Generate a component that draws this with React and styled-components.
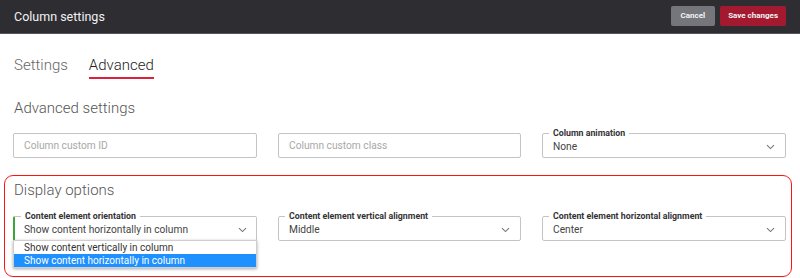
import React from "react";
import styled, { createGlobalStyle } from "styled-components";

const GlobalStyle = createGlobalStyle`
  body {
    margin: 0;
    font-family: Roboto, "Liberation Sans", sans-serif;
    background: #fff;
  }
`;

const Header = styled.header`
  height: 33px;
  background: #2e2d32;
  border-bottom: 1px solid #55545a;
  display: flex;
  align-items: center;
  justify-content: space-between;
  padding: 0 14px 0 14px;
  h1 {
    margin: 0;
    font-size: 12.5px;
    font-weight: 400;
    color: #f2f2f2;
  }
`;

const Actions = styled.div`
  display: flex;
  gap: 5px;
  margin-top: -2px;
`;

const Button = styled.button`
  height: 20px;
  border: none;
  border-radius: 2px;
  padding: 0 ${(p) => (p.$primary ? "8px" : "10px")};
  font-family: Roboto, "Liberation Sans", sans-serif;
  font-size: 8px;
  font-weight: 700;
  color: #f4f4f4;
  background: ${(p) => (p.$primary ? "#a3192f" : "#75757c")};
`;

const Body = styled.main`
  padding: 21px 0 0;
`;

const Tabs = styled.div`
  display: flex;
  gap: 21px;
  padding-left: 14px;
`;

const Tab = styled.div`
  font-size: 15px;
  font-weight: 300;
  line-height: 20px;
  color: ${(p) => (p.$active ? "#222" : "#666")};
  padding-bottom: 2px;
  border-bottom: 2px solid ${(p) => (p.$active ? "#d9223c" : "transparent")};
`;

const Heading = styled.h2`
  margin: 0;
  font-size: 15px;
  font-weight: 300;
  color: #555;
  line-height: 20px;
`;

const Section = styled.section`
  padding: 19px 15px 0 14px;
  ${Heading} {
    margin-bottom: 15px;
  }
`;

const Grid = styled.div`
  display: grid;
  grid-template-columns: 244px 243px 244px;
  gap: 21px;
  margin-left: -1px;
`;

const Box = styled.div`
  position: relative;
  height: 25px;
  border: 1px solid #c4c4c4;
  border-left: ${(p) => (p.$focused ? "2px solid #3aa53a" : "1px solid #c4c4c4")};
  border-radius: 2px;
  box-sizing: border-box;
  display: flex;
  align-items: center;
  padding: 2px ${(p) => (p.$focused ? "9px" : "10px")} 0;
  font-size: 10.2px;
  color: #444;
`;

const Placeholder = styled.span`
  color: #a8a8a8;
  font-size: 10.2px;
  margin-top: -2px;
`;

const Legend = styled.span`
  position: absolute;
  top: -7px;
  left: 6px;
  padding: 0 4px;
  background: #fff;
  font-size: 8.8px;
  font-weight: 700;
  line-height: 12px;
  color: #333;
`;

const Value = styled.span`
  flex: 1;
`;

const Chevron = () => (
  <svg width="9" height="6" viewBox="0 0 9 6">
    <path d="M1 1.2 L4.5 4.6 L8 1.2" fill="none" stroke="#777" strokeWidth="1.1" />
  </svg>
);

const Options = styled.section`
  margin: 17px 8px 0 4px;
  border: 1px solid #ff1414;
  border-radius: 9px;
  height: 102px;
  box-sizing: border-box;
  padding: 4px 5px 0 9px;
  ${Heading} {
    margin-bottom: 16px;
  }
`;

const Menu = styled.ul`
  position: absolute;
  top: 100%;
  left: -2px;
  right: -1px;
  margin: 0;
  padding: 0;
  list-style: none;
  background: #fff;
  border: 1px solid #cfcfcf;
  box-shadow: 0 1px 3px rgba(0, 0, 0, 0.35);
  z-index: 2;
`;

const Option = styled.li`
  height: 13px;
  line-height: 13px;
  padding-left: 10px;
  font-size: 10px;
  color: ${(p) => (p.$selected ? "#fff" : "#333")};
  background: ${(p) => (p.$selected ? "#1e90ff" : "#fff")};
`;

const Select = ({ label, value, focused, children }) => (
  <Box $focused={focused}>
    <Legend>{label}</Legend>
    <Value>{value}</Value>
    <Chevron />
    {children}
  </Box>
);

export default function App() {
  return (
    <>
      <GlobalStyle />
      <Header>
        <h1>Column settings</h1>
        <Actions>
          <Button>Cancel</Button>
          <Button $primary>Save changes</Button>
        </Actions>
      </Header>
      <Body>
        <Tabs>
          <Tab>Settings</Tab>
          <Tab $active>Advanced</Tab>
        </Tabs>
        <Section>
          <Heading>Advanced settings</Heading>
          <Grid>
            <Box>
              <Placeholder>Column custom ID</Placeholder>
            </Box>
            <Box>
              <Placeholder>Column custom class</Placeholder>
            </Box>
            <Select label="Column animation" value="None" />
          </Grid>
        </Section>
        <Options>
          <Heading>Display options</Heading>
          <Grid>
            <Select
              label="Content element orientation"
              value="Show content horizontally in column"
              focused
            >
              <Menu>
                <Option>Show content vertically in column</Option>
                <Option $selected>Show content horizontally in column</Option>
              </Menu>
            </Select>
            <Select label="Content element vertical alignment" value="Middle" />
            <Select label="Content element horizontal alignment" value="Center" />
          </Grid>
        </Options>
      </Body>
    </>
  );
}
